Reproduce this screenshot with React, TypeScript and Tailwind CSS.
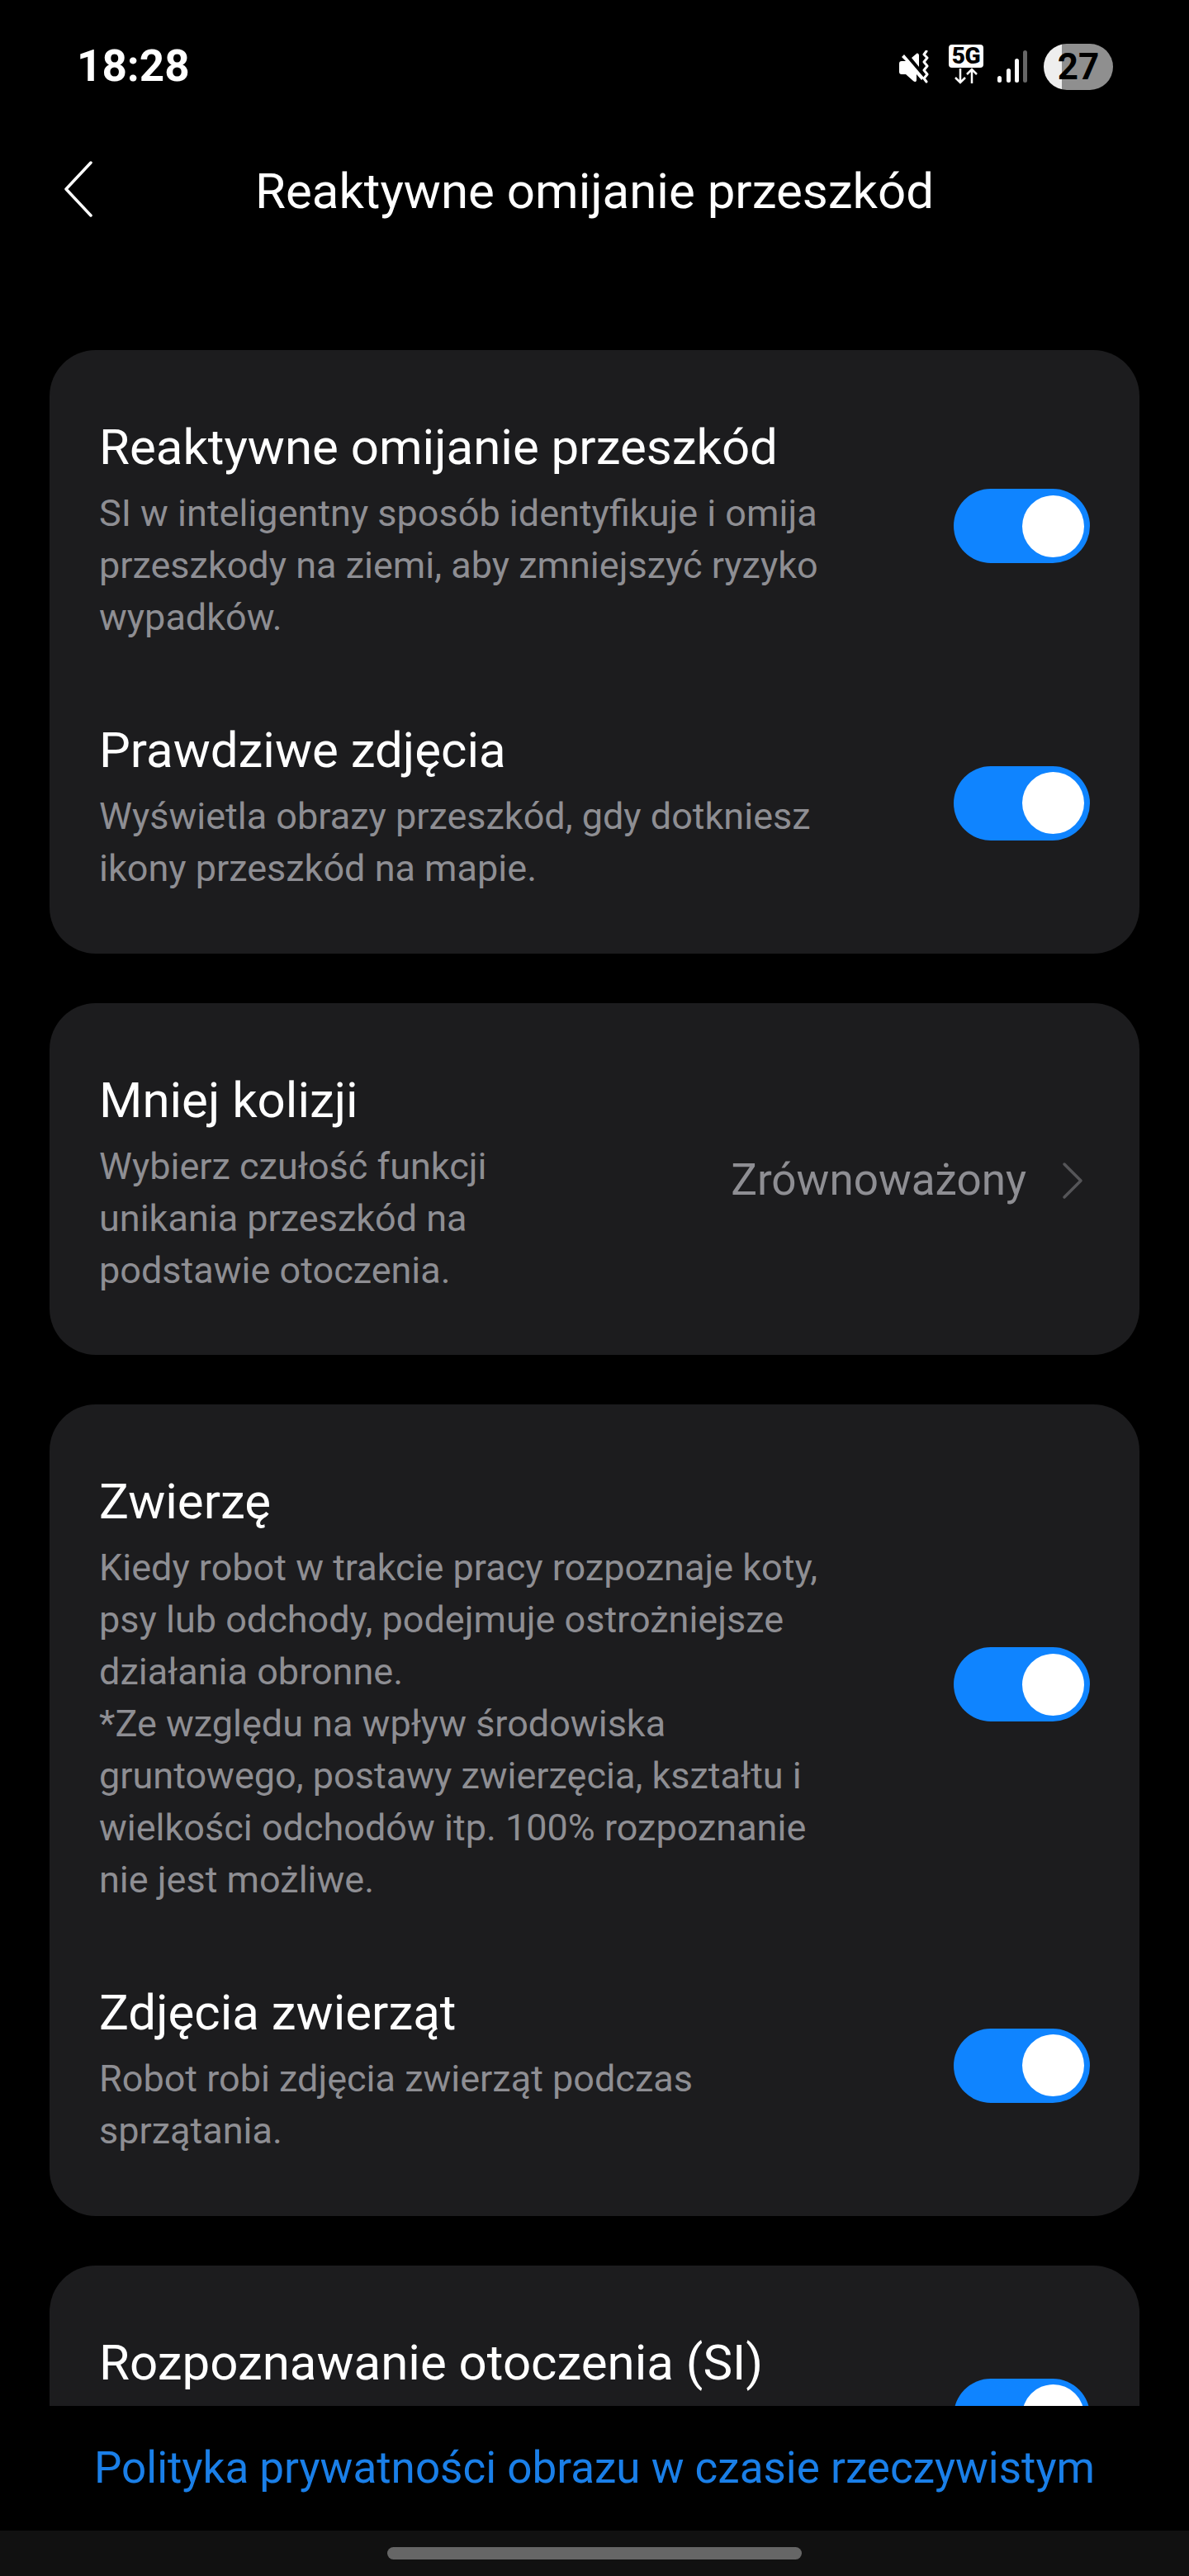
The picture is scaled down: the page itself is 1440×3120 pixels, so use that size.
const font = { fontFamily: 'Roboto, sans-serif' };

function Toggle() {
  return (
    <div className="mb-[11px] flex h-[90px] w-[165px] shrink-0 items-center justify-end rounded-full bg-[#0f84ff] pr-[7px]">
      <div className="h-[75px] w-[75px] rounded-full bg-white" />
    </div>
  );
}

function Row({ title, desc, className = '' }: { title: string; desc?: string; className?: string }) {
  return (
    <div className={`flex items-center justify-between ${className}`}>
      <div className="min-w-0">
        <div className="text-[60px] leading-[72px] text-white">{title}</div>
        {desc ? (
          <div className="mt-[12px] whitespace-pre-line text-[45px] leading-[63px] text-[#8e8e93]">{desc}</div>
        ) : (
          <div className="mt-[12px] h-[126px]" />
        )}
      </div>
      <Toggle />
    </div>
  );
}

function Card({ children, className = '' }: { children: React.ReactNode; className?: string }) {
  return <div className={`shrink-0 rounded-[56px] bg-[#1c1c1e] px-[60px] pt-[82px] ${className}`}>{children}</div>;
}

export default function App() {
  return (
    <div className="flex h-[3120px] w-[1440px] flex-col overflow-hidden bg-black" style={font}>
      {/* status bar */}
      <div className="flex h-[158px] shrink-0 items-center justify-between pl-[93px] pr-[92px] pt-[3px]">
        <span className="text-[53px] font-bold text-white">18:28</span>
        <div className="flex items-center">
          <svg width="40" height="40" viewBox="0 0 40 40" className="mr-[21px]">
            <path d="M1 16c0-2 1-3 3-3h5l-5-5 3-3 24 28-3 3-6-7v7c0 2-2 3-4 1l-9-8H4c-2 0-3-1-3-3z" fill="#fff" />
            <path d="M16 9l6-5c1-1 3 0 3 2v14z" fill="#fff" />
            <path d="M34 1l-3 4 4 4-4 5 4 5-4 5 4 5-4 5 3 4" fill="none" stroke="#fff" strokeWidth="3" strokeLinecap="round" strokeLinejoin="round" />
          </svg>
          <div className="mb-[5px] mr-[17px] flex w-[42px] flex-col items-center">
            <div className="flex h-[28px] w-[42px] items-center justify-center rounded-[4px] bg-white text-[28px] font-black leading-none tracking-[-0.5px] text-black">5G</div>
            <svg width="30" height="20" viewBox="0 0 30 20">
              <path d="M8 1v17M2 12l6 6 6-6M22 19V2M16 8l6-6 6 6" fill="none" stroke="#fff" strokeWidth="2.5" />
            </svg>
          </div>
          <svg width="36" height="40" viewBox="0 0 36 40" className="mr-[20px]">
            <rect x="0" y="31" width="5" height="8" rx="2.5" fill="#fff" />
            <rect x="11" y="22" width="5" height="17" rx="2.5" fill="#fff" />
            <rect x="21" y="10" width="5" height="29" rx="2.5" fill="#fff" />
            <rect x="31" y="0" width="5" height="39" rx="2.5" fill="#666" />
          </svg>
          <div className="flex h-[56px] w-[84px] items-center justify-center overflow-hidden rounded-full bg-[linear-gradient(90deg,#eeeeee_26%,#8f8f8f_26%)] text-[44px] font-bold leading-none text-black">27</div>
        </div>
      </div>

      {/* header */}
      <div className="relative flex h-[148px] shrink-0 items-center justify-center">
        <svg width="40" height="72" viewBox="0 0 40 72" className="absolute left-[76px] top-[36px]">
          <path d="M34 3L4 35l30 32" fill="none" stroke="#fff" strokeWidth="3.5" strokeLinecap="round" strokeLinejoin="round" />
        </svg>
        <span className="text-[60px] text-white">Reaktywne omijanie przeszkód</span>
      </div>

      {/* scroll area */}
      <div className="flex min-h-0 flex-1 flex-col gap-[60px] overflow-hidden px-[60px] pt-[118px]">
        <Card className="pb-[72px]">
          <Row title="Reaktywne omijanie przeszkód" desc={'SI w inteligentny sposób identyfikuje i omija\nprzeszkody na ziemi, aby zmniejszyć ryzyko\nwypadków.'} />
          <Row className="mt-[94px]" title="Prawdziwe zdjęcia" desc={'Wyświetla obrazy przeszkód, gdy dotkniesz\nikony przeszkód na mapie.'} />
        </Card>

        <Card className="pb-[71px]">
          <div className="flex items-center justify-between">
            <div>
              <div className="text-[60px] leading-[72px] text-white">Mniej kolizji</div>
              <div className="mt-[12px] whitespace-pre-line text-[45px] leading-[63px] text-[#8e8e93]">{'Wybierz czułość funkcji\nunikania przeszkód na\npodstawie otoczenia.'}</div>
            </div>
            <div className="mb-[8px] flex items-center">
              <span className="text-[53px] text-[#8e8e93]">Zrównoważony</span>
              <svg width="26" height="46" viewBox="0 0 26 46" className="ml-[43px] mr-[8px]">
                <path d="M3 3l20 20-20 20" fill="none" stroke="#555558" strokeWidth="3.5" strokeLinecap="round" strokeLinejoin="round" />
              </svg>
            </div>
          </div>
        </Card>

        <Card className="pb-[72px]">
          <Row title="Zwierzę" desc={'Kiedy robot w trakcie pracy rozpoznaje koty,\npsy lub odchody, podejmuje ostrożniejsze\ndziałania obronne.\n*Ze względu na wpływ środowiska\ngruntowego, postawy zwierzęcia, kształtu i\nwielkości odchodów itp. 100% rozpoznanie\nnie jest możliwe.'} />
          <Row className="mt-[94px]" title="Zdjęcia zwierząt" desc={'Robot robi zdjęcia zwierząt podczas\nsprzątania.'} />
        </Card>

        <Card className="pb-[72px]">
          <Row title="Rozpoznawanie otoczenia (SI)" />
        </Card>
      </div>

      {/* footer */}
      <div className="flex h-[151px] shrink-0 items-center justify-center bg-black">
        <span className="text-[53px] text-[#1a7fe8]">Polityka prywatności obrazu w czasie rzeczywistym</span>
      </div>

      {/* nav bar */}
      <div className="flex h-[55px] shrink-0 justify-center bg-[#111111] pt-[20px]">
        <div className="h-[15px] w-[502px] rounded-full bg-[#666666]" />
      </div>
    </div>
  );
}
